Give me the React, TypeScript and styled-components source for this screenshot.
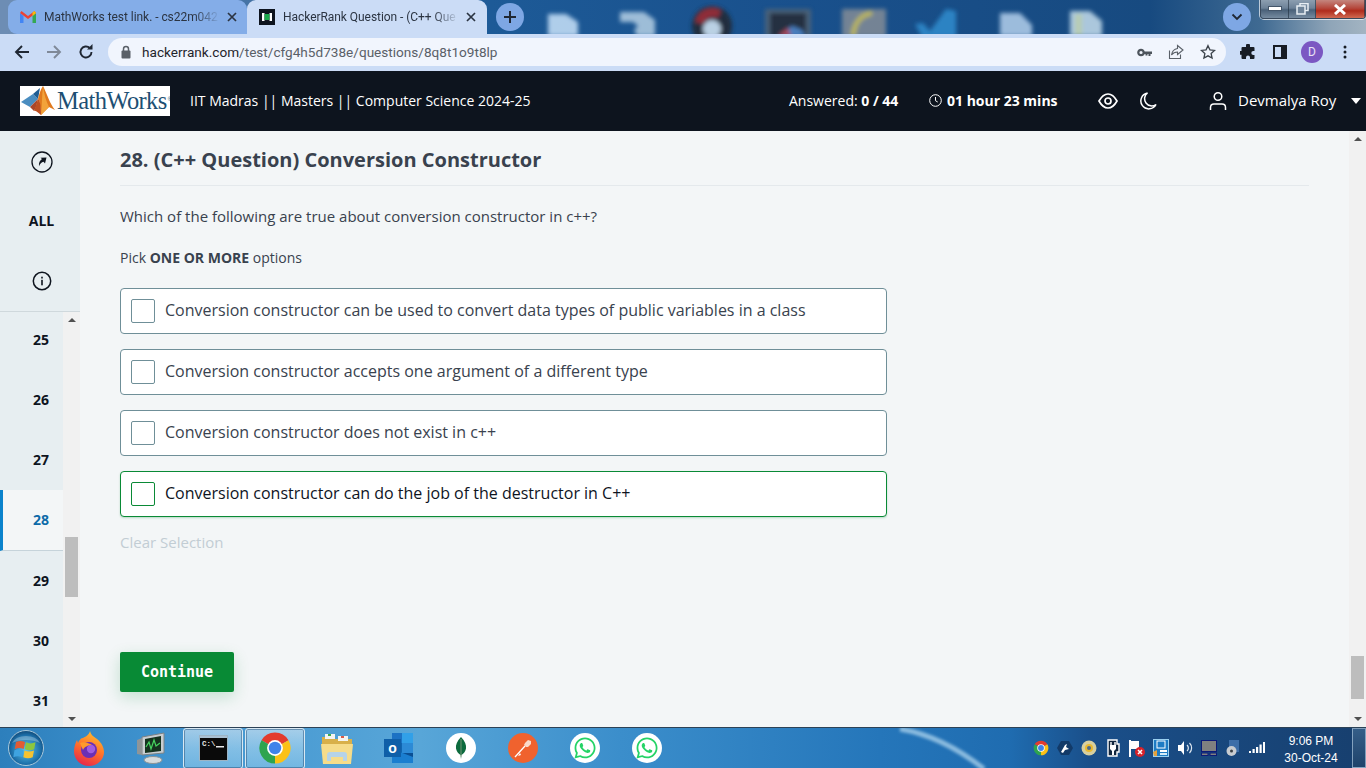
import { createGlobalStyle, styled } from "styled-components";
import { FaWhatsapp } from "react-icons/fa";

const GlobalStyle = createGlobalStyle`
  html, body {
    margin: 0;
    padding: 0;
    width: 1366px;
    height: 768px;
    overflow: hidden;
    font-family: "Open Sans", "Liberation Sans", sans-serif;
  }
  * { box-sizing: border-box; }
`;

const Screen = styled.div`
  width: 1366px;
  height: 768px;
  display: flex;
  flex-direction: column;
  overflow: hidden;
`;

/* ---------- browser chrome ---------- */

const TabStrip = styled.div`
  height: 34px;
  flex: none;
  display: flex;
  align-items: flex-start;
  padding-left: 8px;
  position: relative;
  background: linear-gradient(90deg, #6d8db4 0, #6d8db4 8px, #1d5a97 490px, #19508c 800px, #174a80 1150px, #3f6a92 1260px, #8fa5b8 1330px, #a3b4c2 1366px);
`;

const Wallpaper = styled.svg`
  position: absolute;
  left: 0;
  top: 0;
`;

const Tab = styled.div<{ $active?: boolean }>`
  width: ${(p) => (p.$active ? 240 : 239)}px;
  height: 34px;
  flex: none;
  position: relative;
  display: flex;
  align-items: center;
  padding-left: 12px;
  border-radius: ${(p) => (p.$active ? "9px 9px 0 0" : "9px 9px 0 9px")};
  background: ${(p) => (p.$active ? "#cbdcf6" : "#84ade8")};
`;

const TabTitle = styled.span`
  width: 174px;
  flex: none;
  margin-left: 8px;
  white-space: nowrap;
  font-family: "Roboto", "Liberation Sans", sans-serif;
  font-size: 12px;
  letter-spacing: -0.05px;
  color: #2b3442;
  -webkit-mask-image: linear-gradient(90deg, #000 150px, transparent 176px);
  mask-image: linear-gradient(90deg, #000 150px, transparent 176px);
`;

const TabClose = styled.svg`
  margin-left: 9px;
`;

const NewTab = styled.div`
  width: 28px;
  height: 28px;
  margin: 3px 0 0 9px;
  border-radius: 50%;
  background: #7ea7e4;
  display: flex;
  align-items: center;
  justify-content: center;
  position: relative;
`;

const TabSearch = styled(NewTab)`
  margin: 3px 0 0 auto;
`;

const WindowButtons = styled.div`
  width: 106px;
  height: 19px;
  margin-left: 9px;
  display: flex;
  position: relative;
  border: 1px solid #39495c;
  border-top: none;
  border-radius: 0 0 4px 4px;
  box-shadow: 0 0 0 1px rgba(255, 255, 255, 0.65);
  overflow: hidden;
`;

const WindowButton = styled.div<{ $w: number; $close?: boolean }>`
  width: ${(p) => p.$w}px;
  flex: none;
  height: 100%;
  display: flex;
  align-items: center;
  justify-content: center;
  border-right: 1px solid rgba(30, 45, 60, 0.6);
  background: ${(p) =>
    p.$close
      ? "linear-gradient(180deg, #c4867e 0, #b5483c 45%, #b02c1c 60%, #d06a52 100%)"
      : "linear-gradient(180deg, #8c9eb0 0, #6d8298 45%, #496078 55%, #768ba0 100%)"};
`;

const Toolbar = styled.div`
  height: 37px;
  flex: none;
  display: flex;
  align-items: center;
  padding: 0 0 1px 3px;
  background: #cbdcf6;
`;

const NavButton = styled.div<{ $w: number }>`
  width: ${(p) => p.$w}px;
  height: 36px;
  flex: none;
  display: flex;
  align-items: center;
  justify-content: center;
`;

const Omnibox = styled.div`
  width: 1118px;
  height: 28px;
  margin-left: 4px;
  flex: none;
  border-radius: 14px;
  background: #f1f5fd;
  display: flex;
  align-items: center;
  padding: 0 2px 0 12px;
`;

const UrlText = styled.span`
  margin-left: 10px;
  font-family: "Roboto", "Liberation Sans", sans-serif;
  font-size: 13.6px;
  color: #1f242b;
  flex: 1;
  span { color: #5a6068; }
`;

const OmniIcon = styled.div`
  width: 32px;
  display: flex;
  justify-content: center;
`;

const Avatar = styled.div`
  width: 22px;
  height: 22px;
  border-radius: 50%;
  background: #7b57c2;
  color: #e8e2f6;
  font-family: "Roboto", "Liberation Sans", sans-serif;
  font-size: 12px;
  display: flex;
  align-items: center;
  justify-content: center;
`;

/* ---------- hackerrank header ---------- */

const AppHeader = styled.header`
  height: 60px;
  flex: none;
  display: flex;
  align-items: center;
  padding-left: 20px;
  background: #0d141e;
  color: #fff;
`;

const LogoBox = styled.div`
  width: 150px;
  height: 30px;
  flex: none;
  background: #fff;
  display: flex;
  align-items: center;
  padding-left: 1px;
  overflow: hidden;
`;

const LogoMark = styled.svg`
  flex: none;
`;

const LogoText = styled.span`
  font-family: "Liberation Serif", serif;
  font-size: 24.5px;
  line-height: 30px;
  color: #1d4f73;
  margin-left: 1px;
  letter-spacing: -0.6px;
  white-space: nowrap;
`;

const LogoMarkR = styled.span`
  font-family: "Liberation Sans", sans-serif;
  font-size: 5px;
  color: #1d4f73;
  margin: -4px 0 0 1px;
`;

const TestName = styled.div`
  margin: 0 0 2px 20px;
  font-size: 14px;
  width: 341px;
  white-space: nowrap;
`;

const Answered = styled.div`
  margin: 0 0 2px 258px;
  width: 110px;
  flex: none;
  font-size: 14px;
  white-space: nowrap;
  strong { font-weight: 700; }
`;

const Timer = styled.div`
  margin: 0 0 2px 30px;
  display: flex;
  align-items: center;
  gap: 5px;
  font-size: 14px;
  font-weight: 700;
  white-space: nowrap;
  width: 129px;
  flex: none;
`;

const HeaderIcon = styled.div<{ $ml: number }>`
  margin-left: ${(p) => p.$ml}px;
  display: flex;
  align-items: center;
  justify-content: center;
  flex: none;
`;

const UserName = styled.div`
  margin: 0 0 2px 11px;
  width: 108px;
  flex: none;
  font-size: 15px;
  white-space: nowrap;
`;

const Caret = styled.div`
  width: 0;
  height: 0;
  border-left: 5px solid transparent;
  border-right: 5px solid transparent;
  border-top: 6px solid #fff;
`;

/* ---------- page ---------- */

const Body = styled.div`
  flex: 1;
  min-height: 0;
  display: flex;
  background: #f3f6f7;
`;

const Sidebar = styled.aside`
  width: 80px;
  flex: none;
  display: flex;
  flex-direction: column;
  background: #e7eef1;
`;

const SideTop = styled.div`
  height: 181px;
  flex: none;
  border-bottom: 1px solid #cfd8dc;
`;

const SideTool = styled.div<{ $up?: number; $down?: number }>`
  height: 60px;
  display: flex;
  align-items: center;
  justify-content: center;
  padding: ${(p) => p.$down ?? 0}px 0 ${(p) => p.$up ?? 0}px 3px;
  color: #0e141e;
  font-size: 14px;
  font-weight: 700;
`;

const SideList = styled.div`
  flex: 1;
  min-height: 0;
  display: flex;
  overflow: hidden;
`;

const SideNumbers = styled.div`
  width: 63px;
  flex: none;
  margin-top: -2px;
`;

const QuestionItem = styled.div<{ $active?: boolean }>`
  height: ${(p) => (p.$active ? 61 : 60)}px;
  display: flex;
  align-items: center;
  justify-content: center;
  padding: ${(p) => (p.$active ? "0 0 1px 16px" : "0 0 2px 19px")};
  font-size: 14px;
  font-weight: 700;
  color: ${(p) => (p.$active ? "#0d6aa8" : "#0e141e")};
  background: ${(p) => (p.$active ? "#f3f6f7" : "transparent")};
  border-left: ${(p) => (p.$active ? "3px solid #0a83cc" : "none")};
  border-bottom: ${(p) => (p.$active ? "1px solid #c6d3da" : "none")};
`;

const Scrollbar = styled.div<{ $w: number }>`
  width: ${(p) => p.$w}px;
  flex: none;
  display: flex;
  flex-direction: column;
  align-items: center;
  justify-content: space-between;
  background: #f1f1f1;
  position: relative;
`;

const ScrollArrow = styled.div<{ $down?: boolean }>`
  width: 0;
  height: 0;
  margin: ${(p) => (p.$down ? "0 0 6px" : "6px 0 0")};
  border-left: 4px solid transparent;
  border-right: 4px solid transparent;
  ${(p) => (p.$down ? "border-top: 4px solid #505050;" : "border-bottom: 4px solid #505050;")}
`;

const ScrollThumb = styled.div<{ $top: number; $h: number }>`
  position: absolute;
  left: 2px;
  right: 2px;
  top: ${(p) => p.$top}px;
  height: ${(p) => p.$h}px;
  background: #bdbdbd;
`;

const Main = styled.main`
  flex: 1;
  min-width: 0;
  padding: 0 40px;
`;

const QuestionTitle = styled.h1`
  margin: 0;
  height: 55px;
  padding-top: 15px;
  border-bottom: 1px solid #e4e9ec;
  font-size: 20px;
  line-height: 28px;
  font-weight: 700;
  color: #39424e;
`;

const QuestionText = styled.p`
  margin: 19px 0 0;
  font-size: 15px;
  line-height: 22px;
  color: #39424e;
`;

const PickHint = styled.p`
  margin: 21px 0 0;
  font-size: 14px;
  line-height: 20px;
  color: #39424e;
  strong { font-weight: 700; }
`;

const Options = styled.div`
  width: 767px;
  margin-top: 20px;
  display: flex;
  flex-direction: column;
  gap: 15px;
`;

const Option = styled.div<{ $focused?: boolean }>`
  height: 46px;
  display: flex;
  align-items: center;
  padding-left: 10px;
  background: #fff;
  border: 1px solid ${(p) => (p.$focused ? "#0a8a36" : "#6f8f98")};
  border-radius: 4px;
  font-size: 16px;
  color: ${(p) => (p.$focused ? "#0e141e" : "#39424e")};
  box-shadow: ${(p) => (p.$focused ? "0 1px 2px rgba(8, 138, 53, 0.25)" : "none")};
`;

const OptionLabel = styled.span`
  margin-bottom: 2px;
`;

const CheckBox = styled.span<{ $focused?: boolean }>`
  width: 24px;
  height: 24px;
  flex: none;
  margin-right: 10px;
  background: #fff;
  border: 1px solid ${(p) => (p.$focused ? "#0a8a36" : "#6f8f98")};
  border-radius: 2px;
`;

const ClearSelection = styled.div`
  margin-top: 15px;
  font-size: 15px;
  line-height: 20px;
  color: #c2cdd4;
`;

const ContinueButton = styled.button`
  display: block;
  width: 114px;
  height: 40px;
  margin-top: 100px;
  padding: 0;
  border: none;
  border-radius: 2px;
  background: #088a35;
  color: #fff;
  font-family: "DejaVu Sans Mono", "Liberation Mono", monospace;
  font-size: 15px;
  font-weight: 700;
  box-shadow: 0 5px 16px rgba(8, 138, 53, 0.2);
`;

/* ---------- taskbar ---------- */

const Taskbar = styled.footer`
  height: 41px;
  flex: none;
  display: flex;
  align-items: center;
  position: relative;
  border-top: 1px solid #2c4256;
  background: linear-gradient(90deg, #2d7fbc 0, #3f93cf 160px, #58a6d8 420px, #3b8ecb 620px, #2576ba 880px, #1f6cb0 1010px, #1a4f8a 1090px, #173f6e 1366px);
`;

const OrbSlot = styled.div`
  width: 58px;
  flex: none;
  display: flex;
  justify-content: center;
  padding-right: 6px;
`;

const TaskItem = styled.div<{ $active?: boolean }>`
  width: 62px;
  height: 41px;
  flex: none;
  display: flex;
  align-items: center;
  justify-content: center;
  ${(p) =>
    p.$active &&
    `
    border: 1px solid #d7e8f3;
    border-radius: 3px;
    margin: 0 1px;
    width: 60px;
    background: linear-gradient(180deg, rgba(255,255,255,0.5) 0, rgba(180,222,245,0.55) 50%, rgba(140,200,235,0.6) 100%);
    box-shadow: inset 0 0 0 1px rgba(30, 70, 110, 0.45);
  `}
`;

const WhiteDisc = styled.div<{ $bg?: string }>`
  width: 30px;
  height: 30px;
  border-radius: 50%;
  background: ${(p) => p.$bg ?? "#fff"};
  display: flex;
  align-items: center;
  justify-content: center;
  color: #25d366;
  font-size: 24px;
`;

const Tray = styled.div`
  margin-left: auto;
  display: flex;
  align-items: center;
  position: relative;
`;

const TrayIcon = styled.div`
  width: 24px;
  display: flex;
  justify-content: center;
`;

const Clock = styled.div`
  width: 78px;
  margin-left: 3px;
  padding-top: 3px;
  text-align: center;
  color: #fff;
  font-family: "Liberation Sans", sans-serif;
  font-size: 12px;
  line-height: 17px;
`;

const ShowDesktop = styled.div`
  width: 14px;
  height: 40px;
  margin-left: 2px;
  border: 1px solid rgba(190, 215, 235, 0.6);
  background: linear-gradient(180deg, #355e88, #1f436b);
`;

/* ---------- drawings ---------- */

const ChromeIcon = ({ size }: { size: number }) => (
  <svg width={size} height={size} viewBox="0 0 24 24">
    <path d="M12 12L2.47 6.5A11 11 0 0 1 21.53 6.5Z" fill="#e33b2e" />
    <path d="M12 12L21.53 6.5A11 11 0 0 1 12 23Z" fill="#fbc116" />
    <path d="M12 12L12 23A11 11 0 0 1 2.47 6.5Z" fill="#2ea44f" />
    <circle cx="12" cy="12" r="5.6" fill="#fff" />
    <circle cx="12" cy="12" r="4.4" fill="#3f83ea" />
  </svg>
);

const Close = ({ color = "#2b3442" }: { color?: string }) => (
  <TabClose width="10" height="10" viewBox="0 0 10 10">
    <path d="M1 1L9 9M9 1L1 9" stroke={color} strokeWidth="1.7" />
  </TabClose>
);

const Wall = () => (
  <Wallpaper width="1366" height="34" viewBox="0 0 1366 34">
    <defs>
      <filter id="soft"><feGaussianBlur stdDeviation="2.2" /></filter>
    </defs>
    <g filter="url(#soft)" opacity="0.92">
      <path d="M548 14h18l12 8v14h-30z" fill="#bcd8f2" />
      <path d="M620 12h24l11 8v16h-18l-3-6 4-4-5-4h-13z" fill="#a9c6de" />
      <circle cx="712" cy="26" r="20" fill="#202a38" />
      <path d="M695 22a18 18 0 0 1 26-12l-3 8a10 10 0 0 0-14 6z" fill="#9a2a33" />
      <circle cx="712" cy="29" r="9" fill="#c8dcec" />
      <rect x="765" y="9" width="46" height="28" fill="#4d6478" />
      <rect x="770" y="13" width="36" height="24" fill="#272f3a" />
      <path d="M778 36l14-10 10 4 3 6z" fill="#4e83c4" />
      <path d="M778 36l10-8 3 8z" fill="#b84a58" />
      <rect x="842" y="9" width="44" height="28" fill="#7b8896" />
      <path d="M853 36c1-12 7-21 19-23" fill="none" stroke="#c7bd58" strokeWidth="5" />
      <path d="M915 24l8-1 7 8 16-22 10 2v26h-34z" fill="#2f88c9" />
      <path d="M1000 13h20l12 12v11h-32z" fill="#a8c6e4" />
      <path d="M1070 11h20l12 10v15h-32z" fill="#b8d2e4" />
      <path d="M1075 14h7v22h-7z" fill="#c6d8b8" />
    </g>
  </Wallpaper>
);

const Streak = () => (
  <Wallpaper width="1366" height="41" viewBox="0 0 1366 41">
    <defs>
      <filter id="glow"><feGaussianBlur stdDeviation="1.4" /></filter>
    </defs>
    <path d="M900 1C930 6 960 22 984 41" fill="none" stroke="#b8dcf2" strokeWidth="5" opacity="0.7" filter="url(#glow)" />
  </Wallpaper>
);

const Membrane = () => (
  <LogoMark width="35" height="30" viewBox="0 0 35 30">
    <path d="M0 16L12 8l5 5-8 8z" fill="#4a8dc0" />
    <path d="M12 8L19 2l-2 11z" fill="#1f5d93" />
    <path d="M9 21l8-8-2 8-2 4z" fill="#a9462a" />
    <path d="M22 0c4 8 7 18 12 24l-6-3-8 8C19 22 19 13 17 13 18 8 20 3 22 0z" fill="#e07a1f" />
    <path d="M22 0c1 8 3 15 6 21l-8 8C21 18 21 9 22 0z" fill="#f2a33a" />
    <path d="M17 13c2 0 3 9 3 16-3-2-5-5-7-4z" fill="#bd4f21" />
  </LogoMark>
);

const WinOrb = () => (
  <svg width="38" height="38" viewBox="0 0 38 38">
    <defs>
      <radialGradient id="orb" cx="50%" cy="55%" r="60%">
        <stop offset="0" stopColor="#5fc6ee" />
        <stop offset="0.7" stopColor="#1c6ea8" />
        <stop offset="1" stopColor="#0d3c66" />
      </radialGradient>
    </defs>
    <circle cx="19" cy="19" r="17.5" fill="url(#orb)" stroke="#a9c9dc" />
    <path d="M9 13c3-1.5 6-1.5 9 0l-1.3 7c-3-1.3-6-1.3-9 .2z" fill="#e25b34" />
    <path d="M19 13.3c3 1.5 6 1.5 9.5 0l-1.3 7c-3.2 1.3-6.2 1.3-9.4-.1z" fill="#8cc63f" />
    <path d="M7.5 21.3c3-1.5 6-1.5 9 0l-1.2 6.8c-3-1.3-6-1.3-9 .2z" fill="#3fa3e0" />
    <path d="M17.5 21.5c3.1 1.4 6.1 1.4 9.5 0l-1.3 6.8c-3.2 1.3-6.2 1.3-9.4-.1z" fill="#f7c331" />
    <path d="M5 14a15 11 0 0 1 28 0c-8-4-20-4-28 0z" fill="#fff" opacity="0.28" />
  </svg>
);

const Firefox = () => (
  <svg width="32" height="36" viewBox="0 0 32 36">
    <defs>
      <linearGradient id="fx" x1="0.7" y1="0" x2="0.3" y2="1">
        <stop offset="0" stopColor="#ffc02e" />
        <stop offset="0.55" stopColor="#ff6a2b" />
        <stop offset="1" stopColor="#e5264f" />
      </linearGradient>
    </defs>
    <path d="M17 1c1 4 3 5 7 8 5 4 7 9 7 13 0 8-7 14-15 14S1 30 1 21c0-5 2-9 3-11l1 3c1-3 3-5 5-5 2-1 6-3 7-7z" fill="url(#fx)" />
    <circle cx="16" cy="20" r="8" fill="#6b2fb5" />
    <circle cx="18" cy="19" r="4.2" fill="#a05ce0" />
    <path d="M7 13c4-2 9 0 12 2-4 0-8 2-9 5z" fill="#ff9a2b" />
  </svg>
);

const TaskManager = () => (
  <svg width="30" height="34" viewBox="0 0 30 34">
    <path d="M6 6L28 2v20L6 24z" fill="#c9ced1" stroke="#7b8286" />
    <path d="M9 8l16-3v15L9 22z" fill="#16321f" />
    <path d="M10 16l3-5 2 7 3-9 2 6 4-3" fill="none" stroke="#47d35f" strokeWidth="1.2" />
    <path d="M1 9l5-2v17l-5-1z" fill="#8f9598" />
    <ellipse cx="17" cy="29" rx="9" ry="3.5" fill="#d6dadc" stroke="#8c9396" />
  </svg>
);

const Folder = () => (
  <svg width="32" height="34" viewBox="0 0 32 34">
    <path d="M1 6h10l2 2h18v6H1z" fill="#d8b04a" />
    <rect x="4" y="3" width="10" height="5" fill="#f4f4f0" />
    <rect x="7" y="3" width="3" height="2" fill="#3faa4c" />
    <rect x="17" y="5" width="10" height="5" fill="#f4f4f0" />
    <rect x="20" y="5" width="3" height="2" fill="#d95a4a" />
    <path d="M0 13h32l-2 20H2z" fill="#f6dc8a" />
    <path d="M6 30v-6c0-2 1-3 3-3h14c2 0 3 1 3 3v6h-4v-4H10v4z" fill="#b6d3e8" />
  </svg>
);

const Outlook = () => (
  <svg width="32" height="32" viewBox="0 0 32 32">
    <rect x="9" y="1" width="21" height="10" fill="#1c72c4" />
    <rect x="19" y="1" width="11" height="10" fill="#31a0e8" />
    <rect x="9" y="11" width="21" height="10" fill="#1065b0" />
    <rect x="19" y="11" width="11" height="10" fill="#2c8ad6" />
    <path d="M9 21h21v10H9z" fill="#0a4f94" />
    <path d="M9 17l21 8v6H9z" fill="#1a7ed0" />
    <rect x="1" y="7" width="17" height="18" fill="#0f5fa8" />
    <text x="9.5" y="21" textAnchor="middle" fontFamily="Liberation Sans" fontSize="14" fontWeight="700" fill="#fff">o</text>
  </svg>
);

const Terminal = () => (
  <svg width="29" height="26" viewBox="0 0 29 26">
    <rect x="0.5" y="0.5" width="28" height="25" fill="#0a0a0a" stroke="#9db4c4" />
    <rect x="1" y="1" width="27" height="2" fill="#a9c0d2" />
    <text x="3" y="11" fontFamily="Liberation Mono" fontSize="7.5" fontWeight="700" fill="#e6e6e6">C:\</text>
    <rect x="17" y="11" width="8" height="1.5" fill="#e6e6e6" />
  </svg>
);

const TRAY = [
  <ChromeIcon key="chrome" size={16} />,
  <svg key="hex" width="16" height="16" viewBox="0 0 16 16">
    <path d="M4 1h8l4 7-4 7H4L0 8z" fill="#123a68" />
    <path d="M4 12l4-7 2-1-1 3 3 2-4 1-2 3z" fill="#fff" />
  </svg>,
  <svg key="cd" width="16" height="18" viewBox="0 0 16 18">
    <circle cx="8" cy="9" r="7.5" fill="#d7cf9e" />
    <circle cx="8" cy="9" r="4" fill="#e9b92f" />
    <circle cx="8" cy="9" r="2" fill="#4c6a8a" />
  </svg>,
  <svg key="plug" width="14" height="18" viewBox="0 0 14 18">
    <path d="M2 1h9v4h2v8H11v4H2z" fill="#11263e" stroke="#fff" strokeWidth="1.4" />
    <path d="M5 3v3M9 3v3" stroke="#fff" strokeWidth="1.4" />
    <path d="M4 6h6v4l-2 2v4H6v-4L4 10z" fill="#fff" />
  </svg>,
  <svg key="flag" width="16" height="17" viewBox="0 0 16 17">
    <rect x="0" y="0" width="2" height="17" fill="#fff" />
    <path d="M2 1h8v8H2z" fill="#fff" />
    <circle cx="11" cy="12" r="5" fill="#d8222a" />
    <path d="M9 10l4 4m0-4l-4 4" stroke="#fff" strokeWidth="1.5" />
  </svg>,
  <svg key="box" width="16" height="18" viewBox="0 0 16 18">
    <rect x="0.5" y="0.5" width="15" height="17" fill="#1d7bc4" stroke="#9ad0f0" />
    <rect x="4" y="2" width="8" height="7" fill="none" stroke="#fff" />
    <path d="M0 13l4-2v6H1z" fill="#e6a23c" />
    <rect x="7" y="11" width="7" height="2" fill="#fff" />
    <rect x="7" y="14" width="7" height="2" fill="#d6edf9" />
  </svg>,
  <svg key="speaker" width="16" height="16" viewBox="0 0 16 16">
    <path d="M1 5h3l3-4v14l-3-4H1z" fill="#fff" />
    <path d="M10 5a4 4 0 0 1 0 6M12.5 3a7 7 0 0 1 0 10" stroke="#dfe8f0" strokeWidth="1.2" fill="none" />
  </svg>,
  <svg key="screen" width="16" height="16" viewBox="0 0 16 16">
    <rect x="0.5" y="0.5" width="15" height="11" fill="#808080" stroke="#0c1a78" />
    <rect x="0.5" y="13" width="6.5" height="2.5" fill="#808080" stroke="#0c1a78" />
    <rect x="9" y="13" width="6.5" height="2.5" fill="#808080" stroke="#0c1a78" />
  </svg>,
  <svg key="disk" width="14" height="17" viewBox="0 0 14 17">
    <rect x="3" y="0" width="10" height="12" fill="#3d6ea8" />
    <circle cx="5.5" cy="11" r="5" fill="#c8ccd0" />
    <circle cx="5.5" cy="11" r="1.5" fill="#3a3f44" />
  </svg>,
  <svg key="bars" width="16" height="12" viewBox="0 0 16 12">
    <rect x="0" y="9" width="2" height="2" fill="#fff" />
    <rect x="3.5" y="7" width="2.2" height="4" fill="#fff" />
    <rect x="7" y="5" width="2.2" height="6" fill="#fff" />
    <rect x="10.5" y="2.5" width="2.2" height="8.5" fill="#fff" />
    <rect x="14" y="0" width="2" height="11" fill="#fff" />
  </svg>,
];

const NUMBERS = [25, 26, 27, 28, 29, 30, 31];

const OPTIONS = [
  "Conversion constructor can be used to convert data types of public variables in a class",
  "Conversion constructor accepts one argument of a different type",
  "Conversion constructor does not exist in c++",
  "Conversion constructor can do the job of the destructor in C++",
];

export default function App() {
  return (
    <Screen>
      <GlobalStyle />
      <TabStrip>
        <Wall />
        <Tab>
          <svg width="16" height="12" viewBox="0 0 16 12">
            <path d="M0 2v10h3.5V5z" fill="#4285f4" />
            <path d="M12.5 5v7H16V2z" fill="#34a853" />
            <path d="M0 2L1.5 0 8 5l6.5-5L16 2 8 8z" fill="#ea4335" />
            <path d="M12.5 1.5L14.500 0 16 2l-3.5 3z" fill="#fbbc04" />
          </svg>
          <TabTitle>MathWorks test link. - cs22m042</TabTitle>
          <Close />
        </Tab>
        <Tab $active>
          <svg width="16" height="16" viewBox="0 0 16 16">
            <rect width="16" height="16" fill="#0e141e" />
            <rect x="3" y="4" width="2.5" height="8" fill="#fff" />
            <rect x="10.5" y="4" width="2.5" height="8" fill="#fff" />
            <rect x="5.5" y="5" width="5" height="6" fill="#1ba94c" />
          </svg>
          <TabTitle>HackerRank Question - (C++ Que</TabTitle>
          <Close />
        </Tab>
        <NewTab>
          <svg width="14" height="14" viewBox="0 0 14 14">
            <path d="M7 1v12M1 7h12" stroke="#1f2733" strokeWidth="2" />
          </svg>
        </NewTab>
        <TabSearch>
          <svg width="12" height="8" viewBox="0 0 12 8">
            <path d="M1.5 1.5L6 6l4.500-4.500" stroke="#1f2733" strokeWidth="1.8" fill="none" />
          </svg>
        </TabSearch>
        <WindowButtons>
          <WindowButton $w={28}>
            <svg width="14" height="6" viewBox="0 0 14 6"><rect x="0.5" y="0.5" width="13" height="4" fill="#fff" stroke="#44566a" /></svg>
          </WindowButton>
          <WindowButton $w={27}>
            <svg width="13" height="12" viewBox="0 0 13 12">
              <rect x="4" y="0.5" width="8" height="7" fill="none" stroke="#e8eef3" strokeWidth="1.5" />
              <rect x="1" y="3" width="8" height="8" fill="#6f8499" stroke="#e8eef3" strokeWidth="1.5" />
            </svg>
          </WindowButton>
          <WindowButton $w={49} $close>
            <svg width="14" height="11" viewBox="0 0 14 11">
              <path d="M2 1l10 9M12 1L2 10" stroke="#fff" strokeWidth="3" />
            </svg>
          </WindowButton>
        </WindowButtons>
      </TabStrip>

      <Toolbar>
        <NavButton $w={38}>
          <svg width="16" height="16" viewBox="0 0 16 16">
            <path d="M15 8H2M8 2L2 8l6 6" stroke="#1f2733" strokeWidth="1.9" fill="none" />
          </svg>
        </NavButton>
        <NavButton $w={26}>
          <svg width="16" height="16" viewBox="0 0 16 16">
            <path d="M1 8h13M8 2l6 6-6 6" stroke="#7f8998" strokeWidth="1.9" fill="none" />
          </svg>
        </NavButton>
        <NavButton $w={37}>
          <svg width="16" height="16" viewBox="0 0 16 16">
            <path d="M13.5 8a5.5 5.5 0 1 1-1.7-4" stroke="#1f2733" strokeWidth="1.9" fill="none" />
            <path d="M9 5.5h5.5V0z" fill="#1f2733" />
          </svg>
        </NavButton>
        <Omnibox>
          <svg width="12" height="14" viewBox="0 0 12 14">
            <rect x="1.5" y="5.5" width="9" height="8" rx="1" fill="#5a6068" />
            <path d="M3.5 6V4a2.5 2.5 0 0 1 5 0v2" stroke="#5a6068" strokeWidth="1.5" fill="none" />
          </svg>
          <UrlText>hackerrank.com<span>/test/cfg4h5d738e/questions/8q8t1o9t8lp</span></UrlText>
          <OmniIcon>
            <svg width="15" height="9" viewBox="0 0 15 9">
              <circle cx="4" cy="4.5" r="2.7" fill="none" stroke="#4d545c" strokeWidth="2.2" />
              <path d="M6.5 3.5H15V6h-1.5v2h-2V6h-1v1.5h-2V6H6.5z" fill="#4d545c" />
            </svg>
          </OmniIcon>
          <OmniIcon>
            <svg width="16" height="16" viewBox="0 0 16 16">
              <path d="M1.5 6.5v8h11v-4" stroke="#5a6068" strokeWidth="1.1" fill="none" />
              <path d="M9.5 1.5l5.5 4.5-5.5 4.5V8C7 8 5 9 3.5 11c.5-3.5 2.5-6 6-6.5z" stroke="#5a6068" strokeWidth="1.1" fill="none" />
            </svg>
          </OmniIcon>
          <OmniIcon>
            <svg width="16" height="16" viewBox="0 0 24 24">
              <path d="M12 2.5l2.9 6.300 6.900.8-5.100 4.700 1.400 6.800-6.100-3.400-6.100 3.400 1.400-6.800-5.100-4.700 6.900-.8z" stroke="#3c434b" strokeWidth="2" fill="none" />
            </svg>
          </OmniIcon>
        </Omnibox>
        <NavButton $w={44}>
          <svg width="16" height="16" viewBox="0 0 16 16">
            <path d="M6 1.5a2 2 0 0 1 4 0V3h3.5a1 1 0 0 1 1 1v3h-1.2a2 2 0 0 0 0 4h1.2v3a1 1 0 0 1-1 1H10v-1.5a2 2 0 0 0-4 0V15H2.5a1 1 0 0 1-1-1v-3.200H0V7h1.5V4a1 1 0 0 1 1-1H6z" fill="#171c24" />
          </svg>
        </NavButton>
        <NavButton $w={20}>
          <svg width="14" height="14" viewBox="0 0 14 14">
            <rect x="1" y="1" width="12" height="12" fill="none" stroke="#171c24" strokeWidth="2" />
            <rect x="8" y="1" width="5" height="12" fill="#171c24" />
          </svg>
        </NavButton>
        <NavButton $w={44}>
          <Avatar>D</Avatar>
        </NavButton>
        <NavButton $w={22}>
          <svg width="4" height="14" viewBox="0 0 4 14">
            <circle cx="2" cy="2" r="1.5" fill="#171c24" />
            <circle cx="2" cy="7" r="1.5" fill="#171c24" />
            <circle cx="2" cy="12" r="1.5" fill="#171c24" />
          </svg>
        </NavButton>
      </Toolbar>

      <AppHeader>
        <LogoBox>
          <Membrane />
          <LogoText>MathWorks</LogoText>
          <LogoMarkR>®</LogoMarkR>
        </LogoBox>
        <TestName>IIT Madras || Masters || Computer Science 2024-25</TestName>
        <Answered>
          Answered: <strong>0 / 44</strong>
        </Answered>
        <Timer>
          <svg width="13" height="13" viewBox="0 0 13 13">
            <circle cx="6.5" cy="6.5" r="5.8" fill="none" stroke="#fff" strokeWidth="1" />
            <path d="M6.500 3v3.700l2.200 1.300" fill="none" stroke="#fff" strokeWidth="1" />
          </svg>
          01 hour 23 mins
        </Timer>
        <HeaderIcon $ml={40}>
          <svg width="20" height="16" viewBox="0 0 20 16">
            <path d="M1 8c2.500-4.500 5.500-7 9-7s6.500 2.500 9 7c-2.500 4.500-5.500 7-9 7s-6.500-2.500-9-7z" fill="none" stroke="#fff" strokeWidth="1.7" />
            <circle cx="10" cy="8" r="3" fill="none" stroke="#fff" strokeWidth="1.7" />
          </svg>
        </HeaderIcon>
        <HeaderIcon $ml={22}>
          <svg width="17" height="18" viewBox="0 0 17 18">
            <path d="M7.500 1A8 8 0 1 0 16 12.500 7 7 0 0 1 7.500 1z" fill="none" stroke="#fff" strokeWidth="1.5" />
          </svg>
        </HeaderIcon>
        <HeaderIcon $ml={52}>
          <svg width="18" height="20" viewBox="0 0 18 20">
            <circle cx="9" cy="5.500" r="3.800" fill="none" stroke="#fff" strokeWidth="1.500" />
            <path d="M1.500 19v-2.500c0-2 1.500-3.500 3.500-3.500h8c2 0 3.500 1.500 3.500 3.500V19" fill="none" stroke="#fff" strokeWidth="1.500" />
          </svg>
        </HeaderIcon>
        <UserName>Devmalya Roy</UserName>
        <HeaderIcon $ml={5}>
          <Caret />
        </HeaderIcon>
      </AppHeader>

      <Body>
        <Sidebar>
          <SideTop>
            <SideTool $down={2}>
              <svg width="22" height="22" viewBox="0 0 22 22">
                <circle cx="11" cy="11" r="10" fill="none" stroke="#0e141e" strokeWidth="1.3" />
                <path d="M15.500 6.500l-1.500 6-1.500-1.700c-2 .5-3.500 2-4.500 4.500-.5-3.500 1-6 3-7.200L9.500 6.800z" fill="#0e141e" />
              </svg>
            </SideTool>
            <SideTool $up={2}>ALL</SideTool>
            <SideTool>
              <svg width="20" height="20" viewBox="0 0 20 20">
                <circle cx="10" cy="10" r="8.7" fill="none" stroke="#0e141e" strokeWidth="1.5" />
                <rect x="9.2" y="8.8" width="1.6" height="5.5" fill="#0e141e" />
                <rect x="9.2" y="5.7" width="1.6" height="1.8" fill="#0e141e" />
              </svg>
            </SideTool>
          </SideTop>
          <SideList>
            <SideNumbers>
              {NUMBERS.map((n) => (
                <QuestionItem key={n} $active={n === 28}>
                  {n}
                </QuestionItem>
              ))}
            </SideNumbers>
            <Scrollbar $w={17}>
              <ScrollArrow />
              <ScrollThumb $top={225} $h={60} />
              <ScrollArrow $down />
            </Scrollbar>
          </SideList>
        </Sidebar>

        <Main>
          <QuestionTitle>28. (C++ Question) Conversion Constructor</QuestionTitle>
          <QuestionText>Which of the following are true about conversion constructor in c++?</QuestionText>
          <PickHint>
            Pick <strong>ONE OR MORE</strong> options
          </PickHint>
          <Options>
            {OPTIONS.map((text, i) => (
              <Option key={text} $focused={i === 3}>
                <CheckBox $focused={i === 3} />
                <OptionLabel>{text}</OptionLabel>
              </Option>
            ))}
          </Options>
          <ClearSelection>Clear Selection</ClearSelection>
          <ContinueButton>Continue</ContinueButton>
        </Main>

        <Scrollbar $w={17}>
          <ScrollArrow />
          <ScrollThumb $top={525} $h={43} />
          <ScrollArrow $down />
        </Scrollbar>
      </Body>

      <Taskbar>
        <Streak />
        <OrbSlot>
          <WinOrb />
        </OrbSlot>
        <TaskItem><Firefox /></TaskItem>
        <TaskItem><TaskManager /></TaskItem>
        <TaskItem $active><Terminal /></TaskItem>
        <TaskItem $active><ChromeIcon size={34} /></TaskItem>
        <TaskItem><Folder /></TaskItem>
        <TaskItem><Outlook /></TaskItem>
        <TaskItem>
          <WhiteDisc>
            <svg width="12" height="24" viewBox="0 0 12 24">
              <path d="M6 1c4 4 5.500 8 5 11.500C10.500 16 8 18 6.500 19L6 23l-.5-4C4 18 1.500 16 1 12.500.5 9 2 5 6 1z" fill="#0d6b3e" />
              <path d="M6 3v18" stroke="#b8b49a" strokeWidth="0.6" />
            </svg>
          </WhiteDisc>
        </TaskItem>
        <TaskItem>
          <WhiteDisc $bg="#f0622e">
            <svg width="24" height="24" viewBox="0 0 24 24">
              <path d="M4 21L14 10" stroke="#fff" strokeWidth="1.3" />
              <path d="M14 7l3-3 3 1 0 3-3 3-2 0-2-2z" fill="#f9d9c8" />
              <path d="M7 20l3-1-1-2z" fill="#fff" />
            </svg>
          </WhiteDisc>
        </TaskItem>
        <TaskItem><WhiteDisc><FaWhatsapp /></WhiteDisc></TaskItem>
        <TaskItem><WhiteDisc><FaWhatsapp /></WhiteDisc></TaskItem>
        <Tray>
          {TRAY.map((icon, i) => (
            <TrayIcon key={i}>{icon}</TrayIcon>
          ))}
          <Clock>
            9:06 PM
            <br />
            30-Oct-24
          </Clock>
          <ShowDesktop />
        </Tray>
      </Taskbar>
    </Screen>
  );
}
